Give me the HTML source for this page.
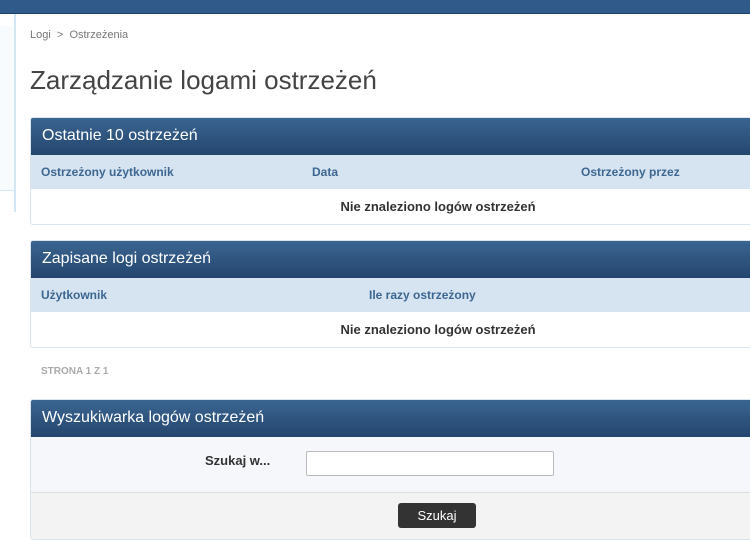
<!DOCTYPE html>
<html><head><meta charset="utf-8"><style>
body{margin:0;width:750px;height:556px;overflow:hidden;background:#fff;font-family:"Liberation Sans",Arial,sans-serif;position:relative}
.top{position:absolute;left:0;top:0;width:750px;height:13px;background:#2f5a8a;border-bottom:1px solid #1f3f66}
.side{position:absolute;left:0;top:14px;width:14px;height:198px;border-right:2px solid #d3e6f3;background:#fff}
.side .a{position:absolute;left:0;top:12px;width:14px;height:164px;border-bottom:1px solid #d3e6f3;background:#f7fbfe}
.bc{position:absolute;left:30px;top:29px;font-size:11px;color:#777}
h1{position:absolute;left:30px;top:65px;margin:0;font-weight:normal;font-size:26px;color:#444}
.p{position:absolute;left:30px;width:814px;border:1px solid #dbe4ec;border-radius:3px 0 0 3px;overflow:hidden}
.h{height:37px;background:linear-gradient(#3a6591,#24466e);color:#fff;font-size:16px;line-height:36px;padding-left:11px}
.c{height:34px;background:#d6e4f1;color:#3d6790;font-size:12px;font-weight:bold;line-height:34px;position:relative}
.c span{position:absolute}
.b{height:35px;line-height:35px;text-align:center;font-size:13px;font-weight:bold;color:#333}
.pg{position:absolute;left:41px;top:366px;font-size:10px;font-weight:bold;color:#aaa}
</style></head><body>
<div class="top"></div>
<div class="side"><div class="a"></div></div>
<div class="bc">Logi &nbsp;&gt;&nbsp; Ostrzeżenia</div>
<h1>Zarządzanie logami ostrzeżeń</h1>
<div class="p" style="top:117px">
<div class="h">Ostatnie 10 ostrzeżeń</div>
<div class="c"><span style="left:10px">Ostrzeżony użytkownik</span><span style="left:281px">Data</span><span style="left:550px">Ostrzeżony przez</span></div>
<div class="b">Nie znaleziono logów ostrzeżeń</div>
</div>
<div class="p" style="top:240px">
<div class="h">Zapisane logi ostrzeżeń</div>
<div class="c"><span style="left:10px">Użytkownik</span><span style="left:338px">Ile razy ostrzeżony</span></div>
<div class="b">Nie znaleziono logów ostrzeżeń</div>
</div>
<div class="pg">STRONA 1 Z 1</div>
<div class="p" style="top:399px">
<div class="h">Wyszukiwarka logów ostrzeżeń</div>
<div style="height:55px;background:#f5f7fa;border-bottom:1px solid #ddd;position:relative">
<span style="position:absolute;left:174px;top:16px;font-size:13px;font-weight:bold;color:#333">Szukaj w...</span>
<div style="position:absolute;left:275px;top:14px;width:246px;height:23px;background:#fff;border:1px solid #bbb;border-radius:2px"></div>
</div>
<div style="height:46px;background:#f3f3f3;position:relative">
<div style="position:absolute;left:367px;top:10px;width:78px;height:25px;background:#333;border-radius:3px;color:#fff;font-size:13px;text-align:center;line-height:25px">Szukaj</div>
</div>
</div>
</body></html>
